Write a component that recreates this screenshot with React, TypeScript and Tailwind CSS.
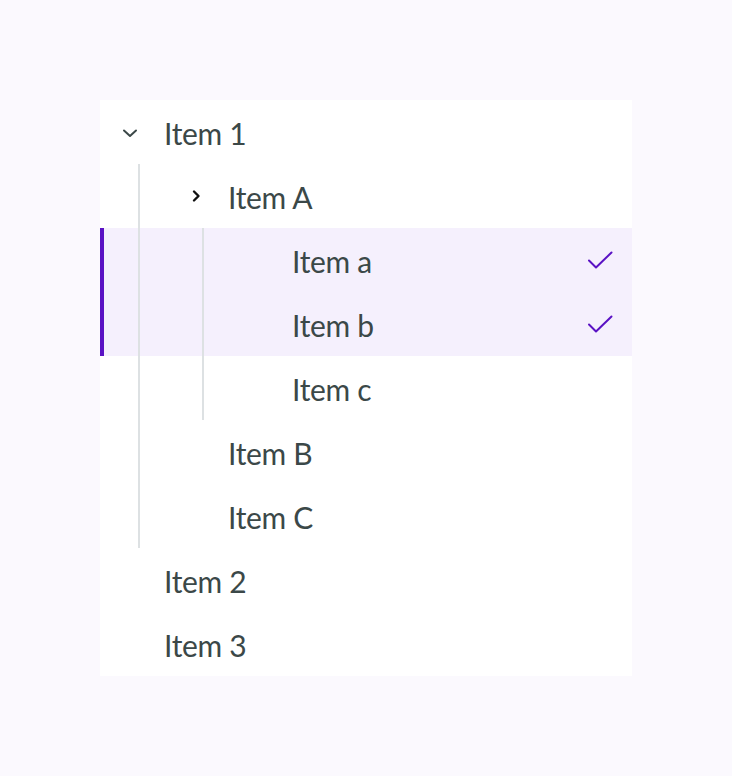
import React from "react";

type Row = {
  label: string;
  guides: number; // number of indent guide columns
  chevron?: "down" | "right";
  selected?: boolean;
};

const rows: Row[] = [
  { label: "Item 1", guides: 0, chevron: "down" },
  { label: "Item A", guides: 1, chevron: "right" },
  { label: "Item a", guides: 2, selected: true },
  { label: "Item b", guides: 2, selected: true },
  { label: "Item c", guides: 2 },
  { label: "Item B", guides: 1 },
  { label: "Item C", guides: 1 },
  { label: "Item 2", guides: 0 },
  { label: "Item 3", guides: 0 },
];

function ChevronDown() {
  return (
    <svg width="16" height="10" viewBox="0 0 16 10" fill="none" className="-ml-[4px] mt-[2px]">
      <path d="M2 2.5 8 8 14 2.5" stroke="#3b4848" strokeWidth="2" strokeLinecap="round" strokeLinejoin="round" />
    </svg>
  );
}

function ChevronRight() {
  return (
    <svg width="10" height="14" viewBox="0 0 10 14" fill="none">
      <path d="M3 2.5 7.5 7 3 11.5" stroke="#111" strokeWidth="2.4" strokeLinecap="round" strokeLinejoin="round" />
    </svg>
  );
}

function Check() {
  return (
    <svg width="26" height="19" viewBox="0 0 26 19" fill="none">
      <path d="M2 9.5 9 16.5 24.5 1.5" stroke="#5a12c4" strokeWidth="2" strokeLinecap="round" strokeLinejoin="round" />
    </svg>
  );
}

export default function App() {
  return (
    <div className="min-h-[776px] w-full bg-[#fbf9fe] p-[100px]" style={{ fontFamily: "Lato, 'Open Sans', sans-serif" }}>
      <div className="w-[532px] bg-white">
        {rows.map((r, i) => (
          <div
            key={i}
            className={
              "flex h-16 items-stretch " +
              (r.selected ? "bg-[#f5f0fd] shadow-[inset_4px_0_0_#5a12c4]" : "")
            }
          >
            {Array.from({ length: r.guides }).map((_, g) => (
              <div key={g} className="w-16 shrink-0">
                <div className="ml-[38px] h-full w-[2px] bg-[#dde1e3]" />
              </div>
            ))}
            <div className="flex w-16 shrink-0 items-center justify-center">
              {r.chevron === "down" && <ChevronDown />}
              {r.chevron === "right" && <ChevronRight />}
            </div>
            <div className="flex flex-1 items-center text-[30px] leading-none tracking-[-0.3px] text-[#3b4848]">
              <span className="mt-[1px]">{r.label}</span>
            </div>
            {r.selected && (
              <div className="flex items-center pr-[19px] pt-[1px]">
                <Check />
              </div>
            )}
          </div>
        ))}
      </div>
    </div>
  );
}
